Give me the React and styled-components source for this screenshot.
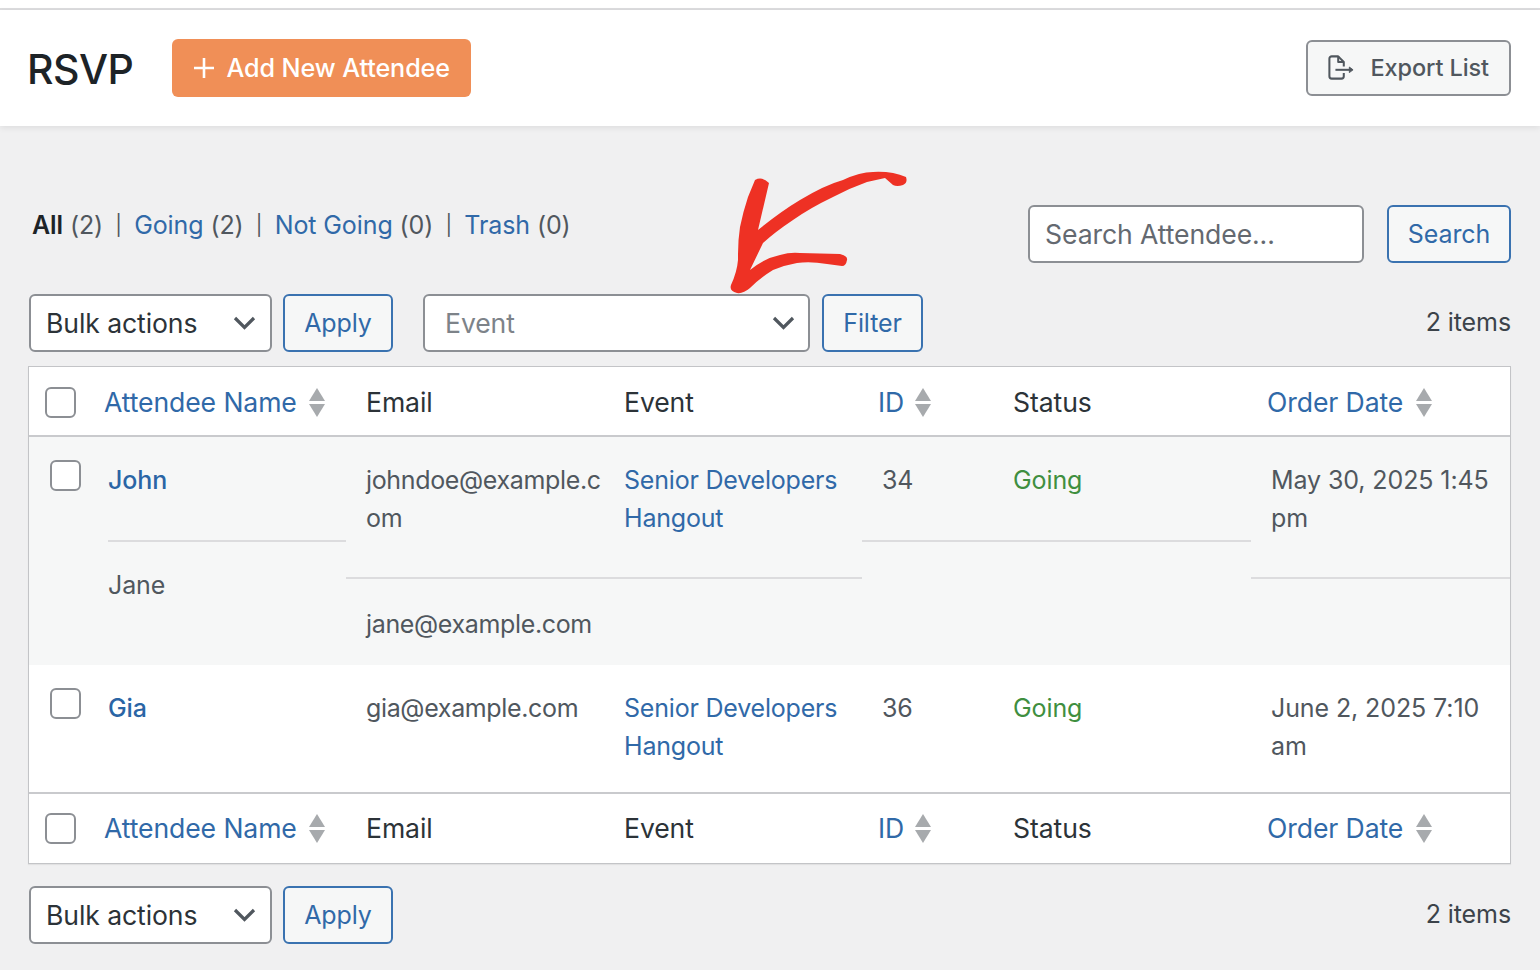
import styled, { createGlobalStyle } from "styled-components";

const GlobalStyle = createGlobalStyle`
  html, body {
    margin: 0;
    padding: 0;
    background: #f0f0f1;
  }
  * {
    box-sizing: border-box;
  }
`;

/* ---------------- STYLES ---------------- */

const Page = styled.div`
  position: relative;
  width: 1540px;
  height: 970px;
  overflow: hidden;
  background: #f0f0f1;
  color: #3c434a;
  font-family: Inter, "Liberation Sans", sans-serif;
  font-size: 25px;
  letter-spacing: -0.1px;
`;

const TopStrip = styled.div`
  height: 10px;
  background: #fff;
  border-bottom: 2px solid #dcdcde;
`;

const Header = styled.header`
  display: flex;
  align-items: center;
  height: 116px;
  padding: 0 29px 0 27px;
  background: #fff;
  box-shadow: 0 2px 6px rgba(0, 0, 0, 0.08);
`;

const Title = styled.h1`
  margin: 2px 39px 0 0;
  font-size: 41px;
  font-weight: 500;
  letter-spacing: -0.5px;
  color: #1d2327;
`;

const AddButton = styled.div`
  display: flex;
  align-items: center;
  gap: 11px;
  height: 58px;
  margin-top: -1px;
  padding: 1px 21px 0;
  border-radius: 6px;
  background: #f08f57;
  color: #fff;
  font-size: 25.2px;
  font-weight: 500;
`;

const ExportButton = styled.div`
  display: flex;
  align-items: center;
  gap: 17px;
  height: 56px;
  margin-left: auto;
  margin-top: -1px;
  padding: 0 20px;
  border: 2px solid #8c8f94;
  border-radius: 6px;
  background: #f6f7f7;
  color: #50575e;
  font-size: 23.5px;
  font-weight: 500;
`;

const Content = styled.main`
  padding: 79px 29px 0 28px;
`;

const SearchRow = styled.div`
  display: flex;
  align-items: center;
  height: 58px;
  padding-left: 4px;
`;

const Filters = styled.div`
  display: flex;
  align-items: center;
  gap: 12.25px;
  margin-top: -18px;
`;

const FilterItem = styled.span`
  color: #50575e;
`;

const CurrentFilter = styled.strong`
  font-weight: 600;
  color: #1d2327;
`;

const Sep = styled.span`
  font-size: 20px;
  color: #50575e;
`;

const Link = styled.a`
  color: ${({ $strong }) => ($strong ? "#2a65a5" : "#3069a8")};
  font-weight: ${({ $strong }) => ($strong ? 500 : 400)};
  text-decoration: none;
`;

const SearchBox = styled.div`
  display: flex;
  align-items: center;
  width: 336px;
  height: 58px;
  margin-left: auto;
  padding-left: 15px;
  border: 2px solid #8c8f94;
  border-radius: 6px;
  background: #fff;
  color: #646970;
  font-size: 26.6px;
`;

const OutlineButton = styled.div`
  display: flex;
  align-items: center;
  justify-content: center;
  width: ${({ $width }) => $width}px;
  height: 58px;
  margin-left: ${({ $gap }) => $gap}px;
  border: 2px solid #3a72b0;
  border-radius: 6px;
  background: #f6f7f7;
  color: #3069a8;
`;

const ActionsRow = styled.div`
  display: flex;
  align-items: center;
  height: 58px;
  margin-top: ${({ $top }) => $top}px;
  padding-left: 1px;
`;

const SelectBox = styled.div`
  display: flex;
  align-items: center;
  justify-content: space-between;
  width: ${({ $width }) => $width}px;
  height: 58px;
  margin-left: ${({ $gap }) => $gap || 0}px;
  padding: 0 ${({ $right }) => $right}px 0 ${({ $left }) => $left}px;
  border: 2px solid #8c8f94;
  border-radius: 6px;
  background: #fff;
  color: ${({ $muted }) => ($muted ? "#7d8389" : "#2c3338")};
  font-size: 26.6px;
`;

const ItemCount = styled.span`
  margin-left: auto;
  margin-top: -2px;
  color: #3c434a;
`;

const Table = styled.section`
  width: 1483px;
  margin-top: 14px;
  border: 1px solid #c3c4c7;
  box-shadow: 0 1px 1px rgba(0, 0, 0, 0.06);
  background: #fff;
`;

const Row = styled.div`
  display: grid;
  grid-template-columns: 59px 258px 258px 258px 131px 258px 259px;
  height: ${({ $height }) => $height}px;
  background: ${({ $alt }) => ($alt ? "#f6f7f7" : "#fff")};
`;

const HeadRow = styled(Row)`
  align-items: center;
  padding: ${({ $foot }) => ($foot ? "0 0 1px" : "2px 0 0")};
  border-top: ${({ $foot }) => ($foot ? "2px solid #c9cacd" : "none")};
  border-bottom: ${({ $foot }) => ($foot ? "none" : "2px solid #c9cacd")};
`;

const HeadCell = styled.div`
  display: flex;
  align-items: center;
  gap: ${({ $gap }) => $gap || 11}px;
  padding-left: ${({ $pad }) => $pad}px;
  color: #2c3338;
  font-size: 26.6px;
  white-space: nowrap;
`;

const CheckCell = styled.div`
  padding-left: ${({ $pad }) => $pad}px;
  padding-top: ${({ $top }) => $top || 0}px;
`;

const Checkbox = styled.span`
  display: block;
  width: 31px;
  height: 31px;
  border: 2px solid #8c8f94;
  border-radius: 6px;
  background: #fff;
`;

const Cell = styled.div`
  padding-top: 24px;
  line-height: 38px;
  color: #50575e;
`;

const EmailCell = styled(Cell)`
  letter-spacing: -0.35px;
`;

const EventCell = styled(Cell)`
  letter-spacing: -0.2px;
`;

const Block = styled.div`
  height: ${({ $height }) => $height}px;
  margin-left: ${({ $inset }) => $inset || 0}px;
  padding-left: ${({ $pad }) => $pad || 0}px;
  border-bottom: ${({ $line }) => ($line ? "2px solid #dcdcde" : "none")};
  word-break: break-all;
`;

const WrapBlock = styled(Block)`
  word-break: normal;
`;

const Plain = styled.div`
  padding-left: 20px;
  padding-top: ${({ $top }) => $top || 0}px;
`;

const Going = styled.span`
  color: #3f8f3f;
`;

const ArrowMark = styled.svg`
  position: absolute;
  left: 725px;
  top: 165px;
  width: 190px;
  height: 135px;
`;

/* ---------------- ICONS ---------------- */

const PlusIcon = () => (
  <svg width="22" height="22" viewBox="0 0 22 22" fill="none" stroke="#fff" strokeWidth="2.6">
    <path d="M11 1v20M1 11h20" />
  </svg>
);

const ExportIcon = () => (
  <svg width="26" height="25" viewBox="0 0 28 26" fill="none" stroke="#50575e" strokeWidth="2.2" strokeLinejoin="round">
    <path d="M17 12V7l-6-6H4a2.500 2.500 0 0 0-2.500 2.500v19A2.500 2.500 0 0 0 4 25h10.500a2.500 2.500 0 0 0 2.500-2.500V19" />
    <path d="M11 1v6h6" />
    <path d="M8 15.500h17" />
    <path d="M23 12.500l4 3-4 3z" fill="#50575e" strokeWidth="1" />
  </svg>
);

const Chevron = () => (
  <svg width="23" height="14" viewBox="0 0 23 14" fill="none" stroke="#50575e" strokeWidth="3.200">
    <path d="M2 2l9.500 9.500L21 2" />
  </svg>
);

const SortIcon = () => (
  <svg width="16" height="29" viewBox="0 0 16 29" fill="#a7aaad">
    <path d="M8 0l8 13H0z" />
    <path d="M0 16h16L8 29z" />
  </svg>
);

/* ---------------- COMPONENT ---------------- */

const HeaderCells = () => (
  <>
    <CheckCell $pad={16}><Checkbox /></CheckCell>
    <HeadCell $pad={16} $gap={12}><Link>Attendee Name</Link><SortIcon /></HeadCell>
    <HeadCell $pad={20}>Email</HeadCell>
    <HeadCell $pad={20}>Event</HeadCell>
    <HeadCell $pad={16}><Link>ID</Link><SortIcon /></HeadCell>
    <HeadCell $pad={20}>Status</HeadCell>
    <HeadCell $pad={16} $gap={13}><Link>Order Date</Link><SortIcon /></HeadCell>
  </>
);

const BulkRow = ({ top, children }) => (
  <ActionsRow $top={top}>
    <SelectBox $width={243} $left={15} $right={14}>Bulk actions<Chevron /></SelectBox>
    <OutlineButton $width={110} $gap={11}>Apply</OutlineButton>
    {children}
    <ItemCount>2 items</ItemCount>
  </ActionsRow>
);

export default function App() {
  return (
    <Page>
      <GlobalStyle />
      <TopStrip />
      <Header>
        <Title>RSVP</Title>
        <AddButton><PlusIcon />Add New Attendee</AddButton>
        <ExportButton><ExportIcon />Export List</ExportButton>
      </Header>

      <Content>
        <SearchRow>
          <Filters>
            <FilterItem><CurrentFilter>All</CurrentFilter> (2)</FilterItem>
            <Sep>|</Sep>
            <FilterItem><Link>Going</Link> (2)</FilterItem>
            <Sep>|</Sep>
            <FilterItem><Link>Not Going</Link> (0)</FilterItem>
            <Sep>|</Sep>
            <FilterItem><Link>Trash</Link> (0)</FilterItem>
          </Filters>
          <SearchBox>Search Attendee...</SearchBox>
          <OutlineButton $width={124} $gap={23}>Search</OutlineButton>
        </SearchRow>

        <BulkRow top={31}>
          <SelectBox $width={387} $gap={30} $left={20} $right={13} $muted>Event<Chevron /></SelectBox>
          <OutlineButton $width={101} $gap={12}>Filter</OutlineButton>
        </BulkRow>

        <Table>
          <HeadRow $height={70}><HeaderCells /></HeadRow>

          <Row $height={228} $alt>
            <CheckCell $pad={21} $top={23}><Checkbox /></CheckCell>
            <Cell>
              <Block $height={81} $inset={20} $line><Link $strong>John</Link></Block>
              <Plain $top={24}>Jane</Plain>
            </Cell>
            <EmailCell>
              <Block $height={118} $pad={20} $line>johndoe@example.com</Block>
              <Plain $top={26}>jane@example.com</Plain>
            </EmailCell>
            <EventCell>
              <WrapBlock $height={118} $pad={20} $line><Link>Senior Developers Hangout</Link></WrapBlock>
            </EventCell>
            <Cell>
              <Block $height={81} $pad={20} $line>34</Block>
            </Cell>
            <Cell>
              <Block $height={81} $pad={20} $line><Going>Going</Going></Block>
            </Cell>
            <Cell>
              <WrapBlock $height={118} $pad={20} $line>May 30, 2025 1:45 pm</WrapBlock>
            </Cell>
          </Row>

          <Row $height={127}>
            <CheckCell $pad={21} $top={23}><Checkbox /></CheckCell>
            <Cell><Plain><Link $strong>Gia</Link></Plain></Cell>
            <EmailCell><Plain>gia@example.com</Plain></EmailCell>
            <EventCell><Plain><Link>Senior Developers Hangout</Link></Plain></EventCell>
            <Cell><Plain>36</Plain></Cell>
            <Cell><Plain><Going>Going</Going></Plain></Cell>
            <Cell><Plain>June 2, 2025 7:10 am</Plain></Cell>
          </Row>

          <HeadRow $height={71} $foot><HeaderCells /></HeadRow>
        </Table>

        <BulkRow top={22} />
      </Content>

      <ArrowMark viewBox="725 165 190 135">
        <path
          fill="#ee3124"
          d="M755 180 Q762 176 769 183 L758 230 Q780 212 800 200 Q825 185 843 180 Q860 172 873 172 Q892 171 906 177 Q908 183 903 185 Q897 187 893 185 L885 178 Q876 180 867 182 Q850 188 833 197 Q810 208 793 220 Q775 232 763 243 L750 270 Q765 258 780 255 Q790 252 800 253 L840 254 Q848 256 847 260 Q846 266 842 266 L827 264 Q810 261 797 263 Q785 265 773 270 Q760 278 750 288 Q743 294 737 293 Q729 291 731 285 Q737 272 738 260 L738 254 Q738 240 740 227 Q743 212 748 197 Z"
        />
      </ArrowMark>
    </Page>
  );
}
